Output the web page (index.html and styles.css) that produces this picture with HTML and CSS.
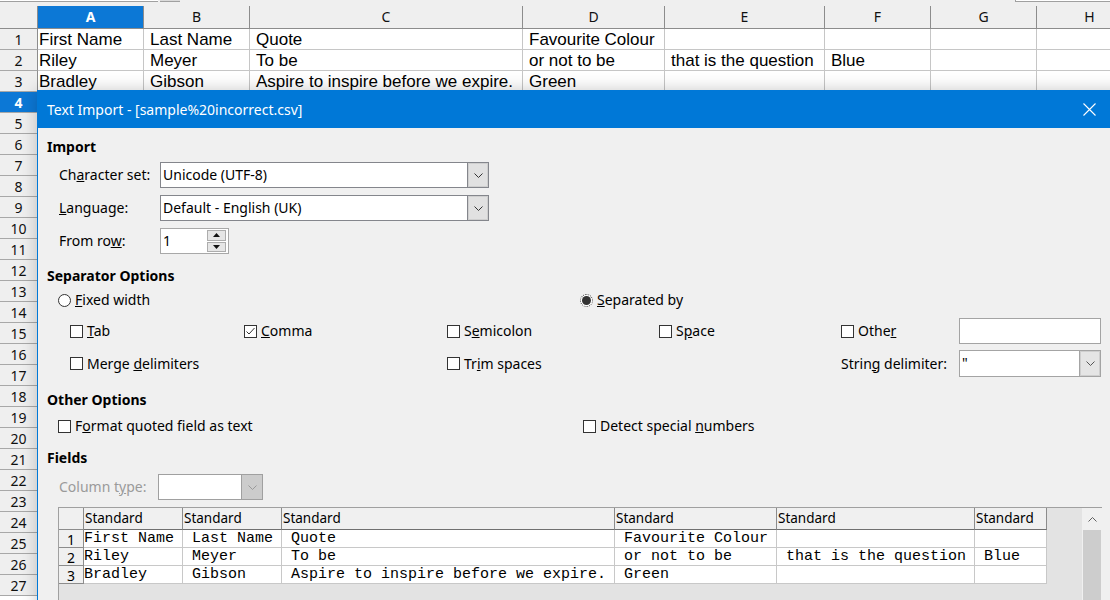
FILE: index.html
```html
<!DOCTYPE html>
<html lang="en">
<head>
<meta charset="utf-8">
<title>Text Import</title>
<link rel="stylesheet" href="styles.css">
</head>
<body>
<div class="app">
  <div class="topbar">
    <div class="namebox"></div>
    <div class="nbbtn"></div>
    <div class="topfill"></div>
    <div class="formula"></div>
  </div>
  <div class="sheet">
    <div class="row hdr">
      <div class="corner"></div>
      <div class="colh sel">A</div>
      <div class="colh">B</div>
      <div class="colh">C</div>
      <div class="colh">D</div>
      <div class="colh">E</div>
      <div class="colh">F</div>
      <div class="colh">G</div>
      <div class="colh">H</div>
    </div>
    <div class="row">
      <div class="rowh">1</div>
      <div class="cell">First Name</div><div class="cell">Last Name</div><div class="cell">Quote</div><div class="cell">Favourite Colour</div><div class="cell"></div><div class="cell"></div><div class="cell"></div><div class="cell"></div>
    </div>
    <div class="row">
      <div class="rowh">2</div>
      <div class="cell">Riley</div><div class="cell">Meyer</div><div class="cell">To be</div><div class="cell">or not to be</div><div class="cell">that is the question</div><div class="cell">Blue</div><div class="cell"></div><div class="cell"></div>
    </div>
    <div class="row">
      <div class="rowh">3</div>
      <div class="cell">Bradley</div><div class="cell">Gibson</div><div class="cell">Aspire to inspire before we expire.</div><div class="cell">Green</div><div class="cell"></div><div class="cell"></div><div class="cell"></div><div class="cell"></div>
    </div>
    <div class="row"><div class="rowh sel">4</div></div>
    <div class="row"><div class="rowh">5</div></div>
    <div class="row"><div class="rowh">6</div></div>
    <div class="row"><div class="rowh">7</div></div>
    <div class="row"><div class="rowh">8</div></div>
    <div class="row"><div class="rowh">9</div></div>
    <div class="row"><div class="rowh">10</div></div>
    <div class="row"><div class="rowh">11</div></div>
    <div class="row"><div class="rowh">12</div></div>
    <div class="row"><div class="rowh">13</div></div>
    <div class="row"><div class="rowh">14</div></div>
    <div class="row"><div class="rowh">15</div></div>
    <div class="row"><div class="rowh">16</div></div>
    <div class="row"><div class="rowh">17</div></div>
    <div class="row"><div class="rowh">18</div></div>
    <div class="row"><div class="rowh">19</div></div>
    <div class="row"><div class="rowh">20</div></div>
    <div class="row"><div class="rowh">21</div></div>
    <div class="row"><div class="rowh">22</div></div>
    <div class="row"><div class="rowh">23</div></div>
    <div class="row"><div class="rowh">24</div></div>
    <div class="row"><div class="rowh">25</div></div>
    <div class="row"><div class="rowh">26</div></div>
    <div class="row"><div class="rowh">27</div></div>
  </div>

  <div class="dialog">
    <div class="titlebar">
      <span class="title">Text Import - [sample%20incorrect.csv]</span>
      <svg class="close" width="13" height="13" viewBox="0 0 13 13"><path d="M0.5 0.5L12.5 12.5M12.5 0.5L0.5 12.5" stroke="#fff" stroke-width="1.1" fill="none"/></svg>
    </div>
    <div class="dbody">
      <div class="heading">Import</div>
      <div class="frow f-first">
        <span class="flabel">Ch<u>a</u>racter set:</span>
        <div class="combo wide"><span class="ctext">Unicode (UTF-8)</span><span class="cbtn"><svg width="9" height="5" viewBox="0 0 9 5"><path d="M0.5 0.5L4.5 4.5L8.5 0.5" stroke="#333" fill="none"/></svg></span></div>
      </div>
      <div class="frow">
        <span class="flabel"><u>L</u>anguage:</span>
        <div class="combo wide"><span class="ctext">Default - English (UK)</span><span class="cbtn"><svg width="9" height="5" viewBox="0 0 9 5"><path d="M0.5 0.5L4.5 4.5L8.5 0.5" stroke="#333" fill="none"/></svg></span></div>
      </div>
      <div class="frow">
        <span class="flabel">From ro<u>w</u>:</span>
        <div class="spin"><span class="ctext">1</span><span class="spinbtns"><span class="sb"><svg width="7" height="4" viewBox="0 0 7 4"><path d="M0 4L3.5 0L7 4Z" fill="#111"/></svg></span><span class="sb"><svg width="7" height="4" viewBox="0 0 7 4"><path d="M0 0L7 0L3.5 4Z" fill="#111"/></svg></span></span></div>
      </div>

      <div class="heading h-sep">Separator Options</div>
      <div class="radiorow">
        <span class="opt"><span class="radio"></span><span><u>F</u>ixed width</span></span>
        <span class="opt"><span class="radio on"></span><span><u>S</u>eparated by</span></span>
      </div>
      <div class="sepgrid">
        <span class="opt"><span class="chk"></span><span><u>T</u>ab</span></span>
        <span class="opt"><span class="chk"><svg width="11" height="11" viewBox="0 0 11 11"><path d="M1.5 5.5L4 8L9.5 2" stroke="#333" fill="none"/></svg></span><span><u>C</u>omma</span></span>
        <span class="opt"><span class="chk"></span><span>S<u>e</u>micolon</span></span>
        <span class="opt"><span class="chk"></span><span>S<u>p</u>ace</span></span>
        <span class="opt"><span class="chk"></span><span>Othe<u>r</u></span></span>
        <div class="tbox"></div>
        <span class="opt g-merge"><span class="chk"></span><span>Merge <u>d</u>elimiters</span></span>
        <span class="opt g-trim"><span class="chk"></span><span>Tr<u>i</u>m spaces</span></span>
        <span class="g-strlbl">Strin<u>g</u> delimiter:</span>
        <div class="combo light g-strbox"><span class="ctext">"</span><span class="cbtn"><svg width="9" height="5" viewBox="0 0 9 5"><path d="M0.5 0.5L4.5 4.5L8.5 0.5" stroke="#555" fill="none"/></svg></span></div>
      </div>

      <div class="heading h-other">Other Options</div>
      <div class="otherrow">
        <span class="opt"><span class="chk"></span><span>F<u>o</u>rmat quoted field as text</span></span>
        <span class="opt"><span class="chk"></span><span>Detect special <u>n</u>umbers</span></span>
      </div>

      <div class="heading h-fields">Fields</div>
      <div class="ctrow">
        <span class="flabel dis">Column t<u>y</u>pe:</span>
        <div class="combo dis"><span class="ctext"></span><span class="cbtn"><svg width="9" height="5" viewBox="0 0 9 5"><path d="M0.5 0.5L4.5 4.5L8.5 0.5" stroke="#999" fill="none"/></svg></span></div>
      </div>

      <div class="preview">
        <div class="ptable">
          <div class="ph pn"></div><div class="ph">Standard</div><div class="ph">Standard</div><div class="ph">Standard</div><div class="ph">Standard</div><div class="ph">Standard</div><div class="ph">Standard</div>
          <div class="pn">1</div><div class="pc">First Name</div><div class="pc"> Last Name</div><div class="pc"> Quote</div><div class="pc"> Favourite Colour</div><div class="pc"></div><div class="pc"></div>
          <div class="pn">2</div><div class="pc">Riley</div><div class="pc"> Meyer</div><div class="pc"> To be</div><div class="pc"> or not to be</div><div class="pc"> that is the question</div><div class="pc"> Blue</div>
          <div class="pn">3</div><div class="pc">Bradley</div><div class="pc"> Gibson</div><div class="pc"> Aspire to inspire before we expire.</div><div class="pc"> Green</div><div class="pc"></div><div class="pc"></div>
        </div>
        <div class="vscroll">
          <span class="sarrow"><svg width="9" height="5" viewBox="0 0 9 5"><path d="M0.5 4.5L4.5 0.5L8.5 4.5" stroke="#606060" fill="none"/></svg></span>
          <span class="thumb"></span>
        </div>
      </div>
    </div>
  </div>
</div>
</body>
</html>
```

FILE: styles.css
```css
* { box-sizing: border-box; margin: 0; padding: 0; }
html, body { width: 1110px; height: 600px; overflow: hidden; }
body { background: #fff; font-family: "Noto Sans", "DejaVu Sans", sans-serif; color: #000; }
.app { position: relative; width: 1110px; height: 600px; overflow: hidden; }

.topbar { display: flex; height: 6px; background: #efefef; }
.namebox { width: 158px; height: 2px; background: #fff; border-bottom: 1px solid #a0a0a0; }
.nbbtn { width: 20px; height: 2px; margin-left: 2px; background: #dadada; border-bottom: 1px solid #a0a0a0; }
.topfill { flex: 1; }
.formula { width: 95px; height: 2px; background: #fff; border-bottom: 1px solid #a0a0a0; border-left: 1px solid #a0a0a0; }

.sheet { width: 1144px; }
.row { display: grid; grid-template-columns: 38px 106px 106px 273px 142px 160px 106px 106px 106px; height: 21px; }
.hdr { height: 23px; background: #efefef; }
.corner, .colh { border-right: 1px solid #8c8c8c; border-bottom: 1px solid #8c8c8c; }
.colh { font-size: 14px; line-height: 22px; text-align: center; color: #111; }
.colh.sel, .rowh.sel { background: #0c78d6; color: #fff; font-weight: 700; }
.rowh { background: #efefef; border-right: 1px solid #8c8c8c; border-bottom: 1px solid #a8a8a8; font-size: 14px; line-height: 20px; padding-top: 1px; text-align: center; color: #111; overflow: hidden; }
.cell { border-right: 1px solid #c6c6c6; border-bottom: 1px solid #c6c6c6; font-family: "Liberation Sans", Arial, sans-serif; font-size: 17px; line-height: 20px; padding: 1px 0 0 1px; white-space: nowrap; overflow: hidden; }
.cell + .cell { padding-left: 6px; }

.dialog { position: absolute; left: 37px; top: 90px; width: 1090px; height: 530px; background: #f0f0f0; border: 1px solid #0078d7; box-shadow: 0 0 16px rgba(0,0,0,0.22); }
.titlebar { height: 37px; background: #0078d7; display: flex; align-items: center; justify-content: space-between; padding-left: 9px; color: #fff; }
.title { font-size: 14px; }
.close { margin-right: 30px; }

.dbody { padding: 8px 0 0 9px; font-size: 14px; line-height: 20px; }
.heading { height: 22px; line-height: 22px; font-weight: 700; }
.h-sep { margin-top: 11px; }
.h-other { margin-top: 12px; }
.h-fields { margin-top: 11px; }

.frow { display: grid; grid-template-columns: 101px auto; align-items: center; height: 26px; margin: 7px 0 0 12px; }
.frow.f-first { margin-top: 4px; }
.flabel.dis { color: #9a9a9a; }

.combo { display: flex; height: 26px; border: 1px solid #84868c; background: #fff; }
.combo.wide { width: 329px; }
.combo.light { border-color: #a4a4a4; }
.ctext { flex: 1; padding-left: 2px; line-height: 24px; white-space: pre; }
.cbtn { width: 21px; background: #e1e1e1; border-left: 1px solid #84868c; box-shadow: inset 0 0 0 1px #cfcfcf; display: flex; align-items: center; justify-content: center; }
.combo.light .cbtn { border-left-color: #a4a4a4; background: #e5e5e5; }
.combo.dis { width: 105px; border-color: #a0a0a0; }
.combo.dis .cbtn { background: #cccccc; border-left-color: #a0a0a0; box-shadow: none; }

.spin { display: flex; width: 69px; height: 26px; border: 1px solid #a8a8a8; background: #fff; }
.spinbtns { width: 22px; display: flex; flex-direction: column; padding: 1px 2px 1px 1px; gap: 1px; }
.sb { flex: 1; background: #e6e6e6; border: 1px solid #adadad; display: flex; align-items: center; justify-content: center; }

.opt { display: flex; align-items: center; gap: 4px; white-space: nowrap; }
.radio { width: 13px; height: 13px; border: 1px solid #333; border-radius: 50%; background: #fff; display: flex; align-items: center; justify-content: center; }
.radio.on { border-style: dotted; }
.radio.on::after { content: ""; width: 9px; height: 9px; border-radius: 50%; background: #333; }
.chk { width: 13px; height: 13px; border: 1px solid #333; background: #fff; display: flex; align-items: center; justify-content: center; }

.radiorow { display: grid; grid-template-columns: 522px auto; height: 20px; margin: 3px 0 0 11px; align-items: center; }
.sepgrid { display: grid; grid-template-columns: 174px 203px 212px 182px 118px 142px; grid-template-rows: 26px 27px; row-gap: 6px; align-items: center; margin: 8px 0 0 23px; }
.tbox { height: 26px; border: 1px solid #a4a4a4; background: #fff; }
.g-merge { grid-column: 1 / 3; grid-row: 2; }
.g-trim { grid-column: 3; grid-row: 2; }
.g-strlbl { grid-column: 5; grid-row: 2; white-space: nowrap; }
.g-strbox { grid-column: 6; grid-row: 2; height: 27px; }

.otherrow { display: grid; grid-template-columns: 525px auto; height: 20px; margin: 5px 0 0 11px; align-items: center; }
.ctrow { display: grid; grid-template-columns: 99px 105px; height: 26px; margin: 5px 0 0 12px; align-items: center; }

.preview { display: flex; justify-content: space-between; align-items: stretch; width: 1044px; height: 100px; margin: 7px 0 0 11px; border-top: 1px solid #a0a0a0; border-left: 1px solid #a0a0a0; background: #e3e3e3; }
.ptable { display: grid; grid-template-columns: 25px 99px 99px 333px 162px 198px 72px; grid-template-rows: 22px 18px 18px 18px; align-self: flex-start; }
.ph { background: #f0f0f0; border-right: 1px solid #8c8c8c; border-bottom: 1px solid #707070; font-size: 13.5px; line-height: 21px; padding-left: 1px; white-space: nowrap; overflow: hidden; }
.pn { background: #f0f0f0; border-right: 1px solid #8c8c8c; border-bottom: 1px solid #8c8c8c; font-size: 14px; line-height: 15px; padding-top: 2px; text-align: center; }
.ph.pn { padding: 0; }
.pc { background: #fff; border-right: 1px solid #c8c8c8; border-bottom: 1px solid #c8c8c8; font-family: "Liberation Mono", "Courier New", monospace; font-size: 15px; line-height: 17px; white-space: pre; overflow: hidden; }
.vscroll { width: 20px; display: flex; flex-direction: column; background: #f0f0f0; }
.sarrow { height: 22px; display: flex; align-items: center; justify-content: center; }
.thumb { flex: 1; background: #cdcdcd; margin: 0 1px; }
```
